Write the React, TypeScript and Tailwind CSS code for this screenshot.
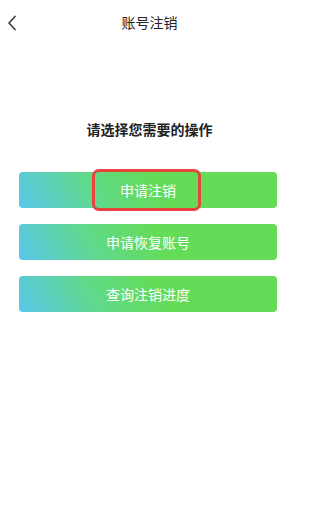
import React from "react";

const font = { fontFamily: '"Noto Sans CJK SC", "Noto Sans", sans-serif' };

function Btn({ label, highlight }: { label: string; highlight?: boolean }) {
  return (
    <div className="relative h-[36px] rounded-[4px] bg-[linear-gradient(60deg,#5ac6ec_0%,#60d98a_30%,#64dc57_55%,#64dc57_100%)] flex items-center justify-center">
      <span className="text-white text-[14px] leading-none">{label}</span>
      {highlight && (
        <div className="absolute left-[73px] top-[-3px] w-[109px] h-[42px] border-[3px] border-[#e8433d] rounded-[7px]" />
      )}
    </div>
  );
}

export default function App() {
  return (
    <div className="w-[299px] h-[515px] bg-white" style={font}>
      <div className="relative h-[44px] flex items-center justify-center">
        <svg className="absolute left-[7px] top-[15px]" width="10" height="16" viewBox="0 0 10 16">
          <path d="M8 1.5 L2 8 L8 14.5" fill="none" stroke="#444" strokeWidth="1.8" strokeLinecap="round" strokeLinejoin="round" />
        </svg>
        <span className="text-[14px] text-[#222] leading-none">账号注销</span>
      </div>
      <div className="pt-[78px] flex justify-center">
        <span className="text-[14px] font-bold text-[#222] leading-none">请选择您需要的操作</span>
      </div>
      <div className="mt-[36px] pl-[19px] pr-[22px] flex flex-col gap-[16px]">
        <Btn label="申请注销" highlight />
        <Btn label="申请恢复账号" />
        <Btn label="查询注销进度" />
      </div>
    </div>
  );
}
